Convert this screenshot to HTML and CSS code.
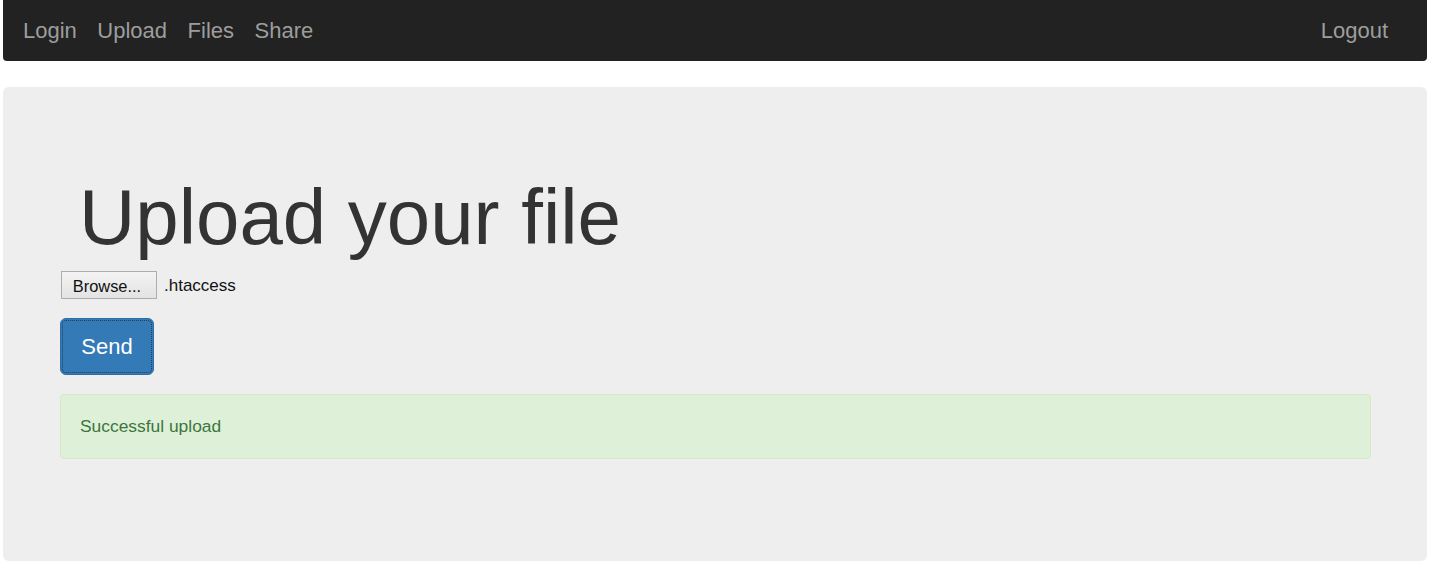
FILE: index.html
```html
<!DOCTYPE html>
<html>
<head>
<meta charset="utf-8">
<title>Upload</title>
<link rel="stylesheet" href="styles.css">
</head>
<body>
<div class="page">
  <nav class="navbar">
    <ul class="nav-links">
      <li><a href="#">Login</a></li>
      <li><a href="#">Upload</a></li>
      <li><a href="#">Files</a></li>
      <li><a href="#">Share</a></li>
    </ul>
    <a class="nav-right" href="#">Logout</a>
  </nav>
  <main class="jumbotron">
    <h1 class="title">Upload your file</h1>
    <div class="file-row">
      <button class="browse" type="button">Browse...</button>
      <span class="file-name">.htaccess</span>
    </div>
    <button class="send" type="button">Send</button>
    <div class="alert">Successful upload</div>
  </main>
</div>
</body>
</html>
```

FILE: styles.css
```css
html, body {
  margin: 0;
  padding: 0;
  background: #ffffff;
  font-family: "Liberation Sans", Arial, sans-serif;
}

.page {
  padding: 0 4px 0 3px;
}

.navbar {
  display: flex;
  align-items: center;
  justify-content: space-between;
  height: 61px;
  background: #222222;
  border-radius: 0 0 4px 4px;
  padding: 0 39px 0 20px;
  box-sizing: border-box;
}

.nav-links {
  display: flex;
  gap: 20.5px;
  list-style: none;
  margin: 0;
  padding: 0;
}

.nav-links a,
.nav-right {
  color: #9d9d9d;
  text-decoration: none;
  font-size: 22px;
  line-height: 61px;
}

.jumbotron {
  margin-top: 26px;
  background: #eeeeee;
  border-radius: 6px;
  padding: 86px 56px 102px 57px;
  display: flex;
  flex-direction: column;
  align-items: flex-start;
}

.title {
  margin: 0 0 10px 19px;
  font-size: 78px;
  line-height: 88px;
  font-weight: 400;
  color: #333333;
}

.file-row {
  display: flex;
  align-items: center;
  gap: 7px;
  color: #111111;
}

.file-name {
  font-size: 17px;
  padding-top: 2px;
}

.browse {
  width: 96px;
  height: 28px;
  margin-left: 1px;
  padding: 2px 4px 0 0;
  font-family: "Liberation Sans", Arial, sans-serif;
  font-size: 16.4px;
  color: #111111;
  background: linear-gradient(#f3f3f3, #e3e3e3);
  border: 1px solid #adadad;
  border-radius: 0;
}

.send {
  margin-top: 19px;
  width: 94px;
  height: 57px;
  padding: 0;
  font-family: "Liberation Sans", Arial, sans-serif;
  font-size: 22px;
  color: #ffffff;
  background: #337ab7;
  border: 1px solid #2e6da4;
  border-radius: 6px;
  outline: 1px dotted #1d3f62;
  outline-offset: -3px;
}

.alert {
  margin-top: 19px;
  align-self: stretch;
  box-sizing: border-box;
  height: 65px;
  padding: 0 19px;
  display: flex;
  align-items: center;
  font-size: 17.4px;
  color: #3c763d;
  background: #dff0d8;
  border: 1px solid #d6e9c6;
  border-radius: 4px;
}
```
